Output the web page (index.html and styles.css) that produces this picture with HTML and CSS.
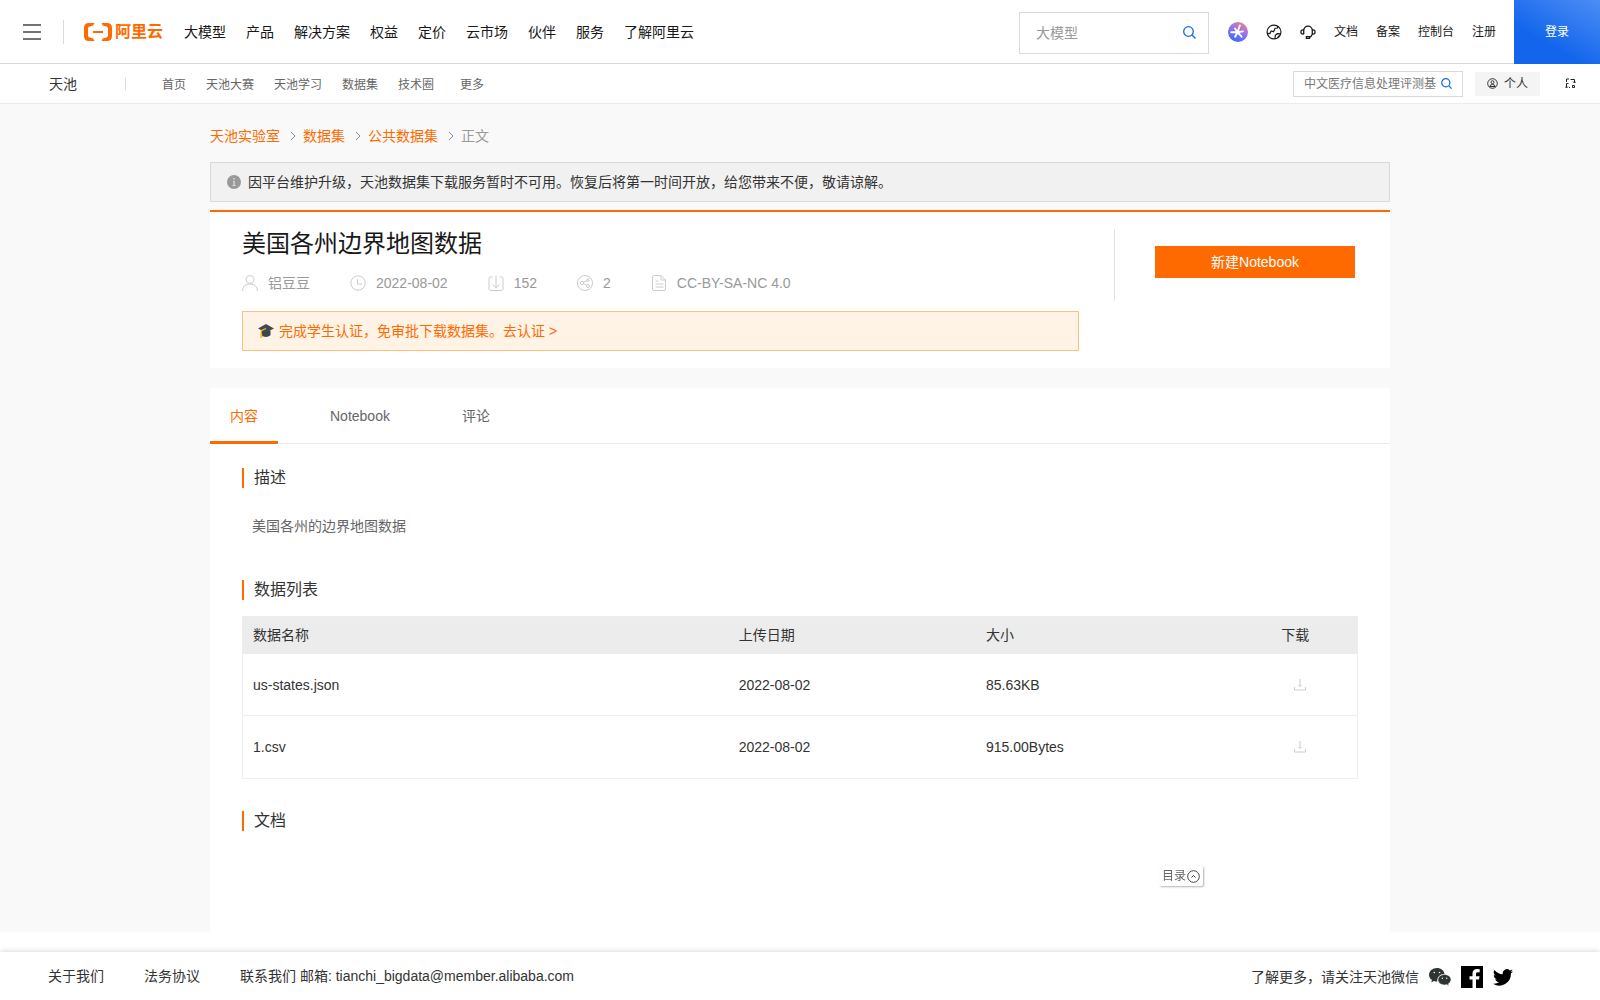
FILE: index.html
```html
<!DOCTYPE html>
<html lang="zh-CN">
<head>
  <meta charset="UTF-8">
  <title>美国各州边界地图数据</title>
  <meta name="viewport" content="width=device-width, initial-scale=1.0">
  <link rel="stylesheet" href="styles.css">
</head>
<body>

<header class="topbar">
  <button class="icon-btn menu-btn" type="button" aria-label="菜单">
    <svg width="18" height="18" viewBox="0 0 18 18"><path d="M0 2h18M0 9h18M0 16h18" stroke="#737373" stroke-width="2"/></svg>
  </button>
  <a class="logo" href="#">
    <svg width="28" height="18" viewBox="0 0 28 18" fill="#ff6a00">
      <path d="M10.500 0H5Q0 0 0 5v8q0 5 5 5h5.500l-1.300-2.600-3.500-.8q-1.700-.5-1.700-2.100V5.500q0-1.600 1.700-2.100l3.500-.8z"/>
      <path d="M17.500 0H23q5 0 5 5v8q0 5-5 5h-5.500l1.300-2.600 3.500-.8q1.700-.5 1.700-2.100V5.500q0-1.600-1.700-2.100l-3.500-.8z"/>
      <path d="M9 8h10v2H9z"/>
    </svg>
    <span>阿里云</span>
  </a>
  <nav class="main-nav">
    <a href="#">大模型</a>
    <a href="#">产品</a>
    <a href="#">解决方案</a>
    <a href="#">权益</a>
    <a href="#">定价</a>
    <a href="#">云市场</a>
    <a href="#">伙伴</a>
    <a href="#">服务</a>
    <a href="#">了解阿里云</a>
  </nav>
  <form class="search search-lg">
    <input type="text" placeholder="大模型" aria-label="搜索">
    <button class="icon-btn" type="button" aria-label="搜索">
      <svg width="13" height="13" viewBox="0 0 13 13" fill="none" stroke="#1366ec" stroke-width="1.300"><circle cx="5.500" cy="5.500" r="4.800"/><path d="M9 9l3.500 3.500"/></svg>
    </button>
  </form>
  <div class="top-links">
    <a href="#" aria-label="AI 助理">
      <svg width="20" height="20" viewBox="0 0 20 20">
        <defs>
          <linearGradient id="ai" x1="0.300" y1="1" x2="0.800" y2="0">
            <stop offset="0" stop-color="#2f6bff"/>
            <stop offset="0.550" stop-color="#9a72ee"/>
            <stop offset="1" stop-color="#f5827c"/>
          </linearGradient>
        </defs>
        <circle cx="10" cy="10" r="10" fill="url(#ai)"/>
        <path d="M11.800 3.500L9.600 10.200M3.200 10.300h6.400M9.600 10.200l4 4.500M9.600 10.200l-2.500 4.500M7 6.500l2.600 3.700M9.600 10.200l5.400-.8" stroke="#fff" stroke-width="1.900" stroke-linecap="round" fill="none"/>
      </svg>
    </a>
    <a href="#" aria-label="语言">
      <svg width="16" height="16" viewBox="0 0 15 15" fill="none" stroke="#181818" stroke-width="1.100"><circle cx="7.500" cy="7.500" r="6.500"/><path d="M1 8.800l2.600.2 1.300-2.500 2.200.8L8.500 4l2.200-.2.800-2M8.500 13.800l.2-3.200 2-1.500 3 .2M11 13l1-2"/></svg>
    </a>
    <a href="#" aria-label="客服">
      <svg width="16" height="16" viewBox="0 0 15 15" fill="none" stroke="#181818" stroke-width="1.200"><path d="M3.500 9.500V6a4 4 0 0 1 8 0v3.500M3.500 5.500h-1Q.8 5.700.8 7.500t1.700 2h1M11.500 5.500h1q1.700.2 1.700 2t-1.700 2h-1M11.500 9.500Q10.800 12 8.800 12.500M6 11.800h3v1.600H6z"/></svg>
    </a>
    <a href="#">文档</a>
    <a href="#">备案</a>
    <a href="#">控制台</a>
    <a href="#">注册</a>
  </div>
  <a class="login" href="#">登录</a>
</header>

<div class="subbar">
  <a class="brand" href="#">天池</a>
  <nav class="sub-nav">
    <a href="#">首页</a>
    <a href="#">天池大赛</a>
    <a href="#">天池学习</a>
    <a href="#">数据集</a>
    <a href="#">技术圈</a>
    <a class="more" href="#">更多</a>
  </nav>
  <form class="search search-sm">
    <input type="text" placeholder="中文医疗信息处理评测基" aria-label="搜索天池">
    <button class="icon-btn" type="button" aria-label="搜索">
      <svg width="11" height="11" viewBox="0 0 11 11" fill="none" stroke="#1366ec" stroke-width="1.200"><circle cx="4.800" cy="4.800" r="4.100"/><path d="M7.800 7.800l2.800 2.800"/></svg>
    </button>
  </form>
  <button class="personal" type="button">
    <svg width="11" height="11" viewBox="0 0 11 11" fill="none" stroke="#333"><circle cx="5.500" cy="5.500" r="4.800"/><circle cx="5.500" cy="4.200" r="1.500"/><path d="M2.800 8.500q.2-2 2.700-2t2.700 2z"/></svg>
    个人
  </button>
  <button class="icon-btn switch-btn" type="button" aria-label="切换">
    <svg width="11" height="11" viewBox="0 0 11 11" fill="none" stroke="#222"><path d="M4 1H1.500v3M1.500 5.500v4M0 8.500l1.500 1.500L3 8.500M3.500 5.500H1.500M4 9.500h1M5.500 1.500H9.500v3M8 3.500L9.500 5 11 3.500M7.500 7.500h2v2h-2z"/></svg>
  </button>
</div>

<main class="page">
  <div class="container">
    <nav class="breadcrumb" aria-label="面包屑">
      <a href="#">天池实验室</a>
      <svg width="23" height="10" viewBox="0 0 23 10" fill="none" stroke="#888"><path d="M11 1l4 4-4 4"/></svg>
      <a href="#">数据集</a>
      <svg width="23" height="10" viewBox="0 0 23 10" fill="none" stroke="#888"><path d="M11 1l4 4-4 4"/></svg>
      <a href="#">公共数据集</a>
      <svg width="23" height="10" viewBox="0 0 23 10" fill="none" stroke="#888"><path d="M11 1l4 4-4 4"/></svg>
      <span>正文</span>
    </nav>

    <div class="notice">
      <svg width="14" height="14" viewBox="0 0 14 14"><circle cx="7" cy="7" r="7" fill="#999"/><path d="M6.300 3h1.500v1.500H6.300zM6 6h1.700v4H8.500v1H5.500v-1h1V7H6z" fill="#ddd"/></svg>
      <span>因平台维护升级，天池数据集下载服务暂时不可用。恢复后将第一时间开放，给您带来不便，敬请谅解。</span>
    </div>

    <section class="card summary">
      <div class="summary-info">
        <h1>美国各州边界地图数据</h1>
        <ul class="meta">
          <li>
            <svg width="16" height="16" viewBox="0 0 16 16"><circle cx="8" cy="4.500" r="4"/><path d="M.5 16q.5-7 7.500-7t7.500 7"/></svg>
            铝豆豆
          </li>
          <li>
            <svg width="16" height="16" viewBox="0 0 16 16"><circle cx="8" cy="8" r="7.200"/><path d="M7.500 4v5H12"/></svg>
            2022-08-02
          </li>
          <li>
            <svg width="16" height="16" viewBox="0 0 16 16"><path d="M4.500 2H2.500Q1 2 1 3.500v10.500q0 1.500 1.500 1.500h11q1.500 0 1.500-1.500V3.500Q15 2 13.500 2h-2M8 .5v12.500M4.500 9.500L8 13l3.500-3.500"/></svg>
            152
          </li>
          <li>
            <svg width="16" height="16" viewBox="0 0 16 16"><circle cx="8" cy="8" r="7.500"/><circle cx="5" cy="8" r="1.700"/><circle cx="11" cy="5" r="1.200"/><circle cx="11" cy="11" r="1.500"/><path d="M6.500 7.200l3.500-1.700M6.500 8.800l3.300 1.500"/></svg>
            2
          </li>
          <li>
            <svg width="16" height="16" viewBox="0 0 16 16"><path d="M10 .5H3Q1.500.5 1.500 2v12q0 1.500 1.500 1.500h10q1.500 0 1.500-1.500V5zM10 .5V5h4.500M4.500 6h3M4.500 9h8M4.500 12h8"/></svg>
            CC-BY-SA-NC 4.0
          </li>
        </ul>
        <a class="verify" href="#">
          <svg width="16" height="14" viewBox="0 0 16 14"><path d="M3 6.500v4.700q5 3.500 9.500 0V6.500z" fill="#37474f"/><path d="M0 4.500L8 0l8 4.500-8 4z" fill="#424a4e"/><path d="M8 4.500L3.200 6.700v3.500" fill="none" stroke="#fdb827" stroke-width="1.200"/><path d="M2.500 9.500h1.500l.5 4.300H2.200z" fill="#fdb827"/></svg>
          <span>完成学生认证，免审批下载数据集。去认证 &gt;</span>
        </a>
      </div>
      <div class="summary-action">
        <button class="primary" type="button">新建Notebook</button>
      </div>
    </section>

    <section class="card detail">
      <div class="tabs" role="tablist">
        <button class="tab active" type="button" role="tab" aria-selected="true">内容</button>
        <button class="tab" type="button" role="tab" aria-selected="false">Notebook</button>
        <button class="tab" type="button" role="tab" aria-selected="false">评论</button>
      </div>
      <div class="detail-body">
        <h2>描述</h2>
        <p class="description">美国各州的边界地图数据</p>

        <h2>数据列表</h2>
        <table class="files">
          <thead>
            <tr>
              <th class="col-name">数据名称</th>
              <th class="col-date">上传日期</th>
              <th class="col-size">大小</th>
              <th>下载</th>
            </tr>
          </thead>
          <tbody>
            <tr>
              <td>us-states.json</td>
              <td>2022-08-02</td>
              <td>85.63KB</td>
              <td>
                <button class="icon-btn download" type="button" aria-label="下载 us-states.json">
                  <svg width="12" height="12" viewBox="0 0 12 12" fill="none" stroke="#ccc"><path d="M6 0v7M4.500 6L6 7.500 7.500 6M.5 8v3h11V8"/></svg>
                </button>
              </td>
            </tr>
            <tr>
              <td>1.csv</td>
              <td>2022-08-02</td>
              <td>915.00Bytes</td>
              <td>
                <button class="icon-btn download" type="button" aria-label="下载 1.csv">
                  <svg width="12" height="12" viewBox="0 0 12 12" fill="none" stroke="#ccc"><path d="M6 0v7M4.500 6L6 7.500 7.500 6M.5 8v3h11V8"/></svg>
                </button>
              </td>
            </tr>
          </tbody>
        </table>

        <h2 class="doc-title">文档</h2>
      </div>
    </section>
  </div>
</main>

<button class="toc" type="button">
  目录
  <svg width="13" height="13" viewBox="0 0 13 13" fill="none" stroke="#444"><circle cx="6.500" cy="6.500" r="5.800"/><path d="M4.500 7.500l2-2 2 2"/></svg>
</button>

<footer class="footer">
  <a href="#">关于我们</a>
  <a href="#">法务协议</a>
  <span>联系我们 邮箱: tianchi_bigdata@member.alibaba.com</span>
  <div class="social">
    <span>了解更多，请关注天池微信</span>
    <a href="#" aria-label="微信">
      <svg width="22" height="18" viewBox="0 0 22 18" fill="#2f3534">
        <path d="M8 0C3.500 0 0 3 0 6.800 0 9 1.100 10.700 3 12l-.8 2.500L5 13q1.500.5 3.300.5C8 9 11 6 15.500 6 15 2.500 12 0 8 0z"/>
        <path d="M15.500 6.500c-3.700 0-6.500 2.300-6.500 5.300s2.800 5.200 6.500 5.200q1.200 0 2.300-.4L20 18l-.6-2.200q2.600-1.600 2.600-4c0-3-2.900-5.300-6.500-5.300z" stroke="#fff" stroke-width=".5"/>
        <circle cx="5.300" cy="4.500" r=".8" fill="#fff"/><circle cx="10.500" cy="4.500" r=".8" fill="#fff"/>
        <circle cx="13.300" cy="10.300" r=".7" fill="#fff"/><circle cx="17.700" cy="10.300" r=".7" fill="#fff"/>
      </svg>
    </a>
    <a href="#" aria-label="Facebook">
      <svg width="22" height="22" viewBox="0 0 22 22"><path d="M0 0h22v22H0z"/><path d="M11.500 22v-8.500h-3v-3.300h3V7.600c0-3 1.800-4.600 4.500-4.600q1.500 0 2.700.2v3H17c-1.700 0-2 .8-2 2v2h3.500l-.5 3.300h-3V22z" fill="#fff"/></svg>
    </a>
    <a href="#" aria-label="Twitter">
      <svg width="20" height="17" viewBox="0 0 24 20"><path d="M24 2.400a10 10 0 0 1-2.800.8A5 5 0 0 0 23.300.5a10 10 0 0 1-3.100 1.200 4.900 4.900 0 0 0-8.400 4.500A14 14 0 0 1 1.700 1a4.900 4.900 0 0 0 1.500 6.600 5 5 0 0 1-2.200-.6 4.900 4.900 0 0 0 3.900 4.900 5 5 0 0 1-2.200.1 4.900 4.900 0 0 0 4.600 3.400A9.900 9.900 0 0 1 0 17.400a14 14 0 0 0 21.500-12.400A10 10 0 0 0 24 2.400z"/></svg>
    </a>
  </div>
</footer>

</body>
</html>
```
FILE: styles.css
```css
* { box-sizing: border-box; }
body {
  margin: 0;
  font-family: "Liberation Sans", "Noto Sans CJK SC", sans-serif;
  font-size: 14px;
  line-height: 20px;
  color: #333;
  background: #fff;
}
a { color: inherit; text-decoration: none; }
button, input { font: inherit; color: inherit; }
svg { display: block; flex: none; }
h1, h2, p, ul { margin: 0; padding: 0; font-weight: normal; }
button { cursor: pointer; }
.icon-btn {
  padding: 0;
  border: 0;
  background: none;
}

/* top bar */
.topbar {
  display: flex;
  align-items: center;
  height: 64px;
  border-bottom: 1px solid #d9d9d9;
  color: #181818;
}
.menu-btn {
  padding: 3px 22px 3px 23px;
  border-right: 1px solid #d9d9d9;
}
.logo {
  display: flex;
  align-items: center;
  gap: 3px;
  margin-left: 20px;
  color: #ff6a00;
  font-size: 16px;
  font-weight: bold;
}
.main-nav {
  display: flex;
  gap: 20px;
  margin-left: 21px;
  white-space: nowrap;
}
.search {
  display: flex;
  align-items: center;
  border: 1px solid #d9d9d9;
  background: #fff;
}
.search input {
  flex: 1;
  min-width: 0;
  padding: 0;
  border: 0;
  outline: 0;
  background: none;
}
.search-lg {
  width: 190px;
  height: 42px;
  margin-top: 2px;
  margin-left: auto;
  padding: 0 12px 0 16px;
}
.search-lg input::placeholder { color: #999; }
.top-links {
  display: flex;
  align-items: center;
  gap: 18px;
  margin: 0 18px 0 19px;
  font-size: 12px;
  line-height: 22px;
  white-space: nowrap;
}
.login {
  display: flex;
  align-items: center;
  justify-content: center;
  align-self: flex-start;
  width: 86px;
  height: 64px;
  color: #fff;
  font-size: 12px;
  background: linear-gradient(30deg, #1366ec 35%, #4d8df5);
}

/* tianchi bar */
.subbar {
  display: flex;
  align-items: center;
  height: 40px;
  border-bottom: 1px solid #ebebeb;
  font-size: 12px;
}
.brand {
  padding: 0 48px 0 49px;
  font-size: 14px;
  line-height: 12px;
  border-right: 1px solid #d9d9d9;
}
.sub-nav {
  display: flex;
  gap: 20px;
  margin-left: 36px;
  padding-top: 2px;
  color: #666;
  white-space: nowrap;
}
.more { margin-left: 6px; }
.search-sm {
  width: 170px;
  height: 26px;
  margin-left: auto;
  padding: 0 10px;
  gap: 4px;
}
.search-sm input::placeholder { color: #777; }
.personal {
  display: flex;
  align-items: center;
  gap: 6px;
  height: 24px;
  margin-left: 12px;
  padding: 0 12px;
  border: 0;
  background: #f4f4f4;
}
.switch-btn { margin: 0 24px 0 25px; }

/* page */
.page { background: #f9f9f9; }
.container {
  max-width: 1180px;
  margin: 0 auto;
}
.breadcrumb {
  display: flex;
  align-items: center;
  padding: 22px 0 16px;
  color: #999;
}
.breadcrumb a { color: #ff6a00; }
.notice {
  display: flex;
  align-items: center;
  gap: 7px;
  height: 40px;
  margin-bottom: 8px;
  padding: 0 16px;
  border: 1px solid #d9d9d9;
  background: #f1f1f1;
}
.card { background: #fff; }
.summary {
  display: flex;
  align-items: flex-start;
  margin-bottom: 20px;
  padding: 16px 35px 17px 32px;
  border-top: 2px solid #ff6a00;
}
.summary-info {
  flex: 1;
  margin-right: 35px;
}
.summary h1 {
  color: #181818;
  font-size: 24px;
  line-height: 32px;
}
.meta {
  display: flex;
  gap: 40px;
  margin: 13px 0 18px;
  color: #999;
  list-style: none;
}
.meta li {
  display: flex;
  align-items: center;
  gap: 10px;
}
.meta svg {
  fill: none;
  stroke: #ccc;
}
.verify {
  display: flex;
  align-items: center;
  gap: 5px;
  height: 40px;
  padding: 0 15px;
  border: 1px solid #ffc07f;
  color: #ff6a00;
  background: #fff3e6;
}
.summary-action {
  height: 72px;
  margin-top: 1px;
  padding: 17px 0 0 40px;
  border-left: 1px solid #e3e3e3;
}
.primary {
  width: 200px;
  height: 32px;
  border: 0;
  color: #fff;
  background: #ff6a00;
}

/* tabs */
.tabs {
  display: flex;
  gap: 32px;
  height: 56px;
  border-bottom: 1px solid #ebebeb;
}
.tab {
  height: 56px;
  padding: 3px 20px 0;
  border: 0;
  border-bottom: 3px solid transparent;
  color: #666;
  background: none;
}
.tab.active {
  border-color: #ff6a00;
  color: #ff6a00;
}
.detail-body { padding: 24px 32px 101px; }
.detail-body h2 {
  padding-left: 10px;
  border-left: 2px solid #ff6a00;
  font-size: 16px;
  line-height: 20px;
}
.description {
  margin: 28px 0 44px;
  padding: 0 10px;
  color: #666;
}
.files {
  width: 100%;
  margin: 16px 0 32px;
  border: 1px solid #ededed;
  border-spacing: 0;
  table-layout: fixed;
}
.files th {
  height: 37px;
  padding: 0 10px 2px;
  font-weight: normal;
  text-align: left;
  background: #ececec;
}
.files td {
  height: 62px;
  padding: 0 10px;
}
.files tbody tr:first-child td { border-bottom: 1px solid #ededed; }
.col-name { width: 43.6%; }
.col-date { width: 22.2%; }
.col-size { width: 26.5%; }
.download {
  display: block;
  padding-left: 13px;
}

.toc {
  position: fixed;
  right: 397px;
  bottom: 114px;
  display: flex;
  align-items: center;
  gap: 1px;
  height: 20px;
  padding: 0 3px;
  border: 0;
  border-radius: 2px;
  color: #666;
  font-size: 12px;
  background: #fff;
  box-shadow: 1px 1px 2px rgba(0,0,0,0.3);
}

/* footer */
.footer {
  display: flex;
  align-items: center;
  gap: 40px;
  height: 48px;
  margin-top: 20px;
  padding: 0 87px 0 48px;
  box-shadow: 0 0 6px rgba(0,0,0,0.2);
}
.social {
  display: flex;
  align-items: center;
  gap: 10px;
  margin-left: auto;
  padding-top: 2px;
}
```
